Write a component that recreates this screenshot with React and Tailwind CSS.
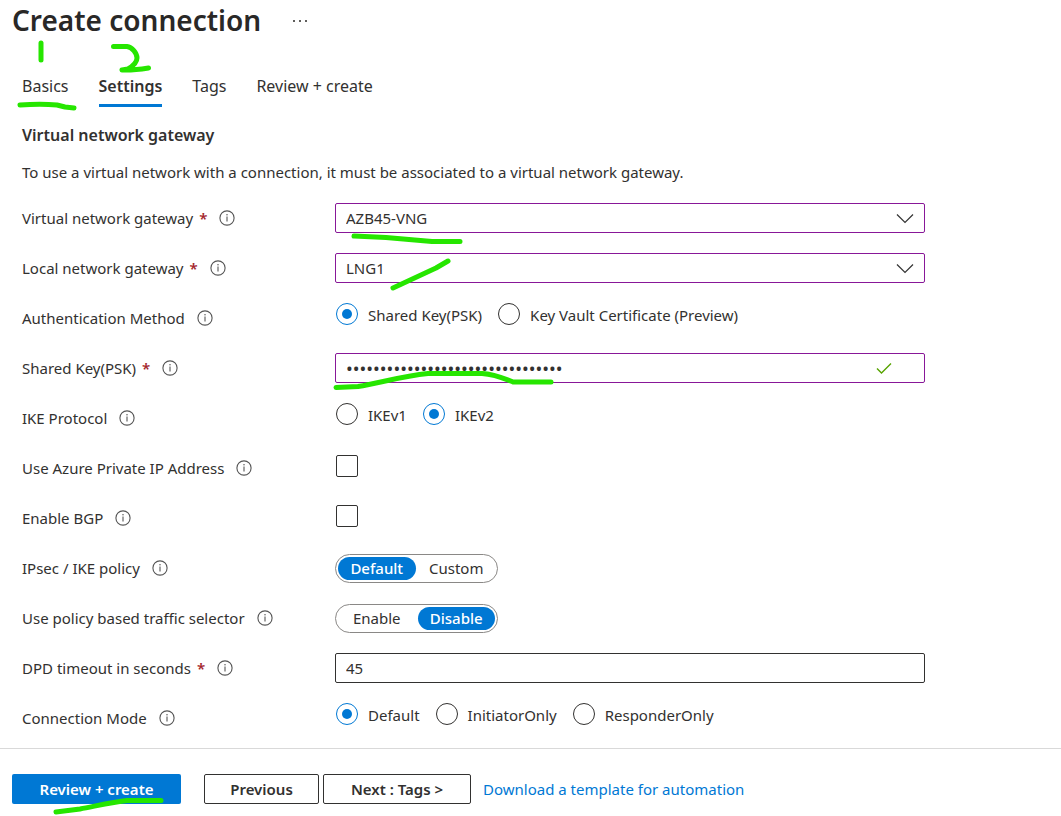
import { useState } from "react";

function InfoIcon() {
  return (
    <svg className="size-4 shrink-0" viewBox="0 0 16 16" fill="none" aria-hidden="true">
      <circle cx="8" cy="8" r="7.1" stroke="#555" strokeWidth="1.1" />
      <path d="M8 6.500v5" stroke="#444" strokeWidth="1" />
      <circle cx="8" cy="4.700" r=".7" fill="#444" />
    </svg>
  );
}

function Row({ label, htmlFor, required, children }) {
  const Tag = htmlFor ? "label" : "span";
  return (
    <div className="grid h-[50px] grid-cols-[313px_minmax(0,590px)] items-center">
      <div className="flex items-center">
        <Tag htmlFor={htmlFor}>{label}</Tag>
        {required && <span className="ml-1.5 font-semibold text-[#a4262c]">*</span>}
        <span className="ml-3 flex">
          <InfoIcon />
        </span>
      </div>
      {children}
    </div>
  );
}

function Dropdown({ id, value }) {
  return (
    <div className="relative">
      <select
        id={id}
        defaultValue={value}
        className="block h-[30px] w-full appearance-none rounded-xs border border-[#881798] bg-white px-2.5 leading-5"
      >
        <option>{value}</option>
      </select>
      <svg
        className="pointer-events-none absolute top-2 right-[11px] h-3.5 w-[18px]"
        viewBox="0 0 18 14"
        fill="none"
        aria-hidden="true"
      >
        <path d="M1 3.5l8 8 8-8" stroke="#333" strokeWidth="1.2" />
      </svg>
    </div>
  );
}

function RadioGroup({ name, options, value }) {
  const [selected, setSelected] = useState(value);
  return (
    <div role="radiogroup" aria-label={name} className="flex gap-4 pb-2 pl-px">
      {options.map((option) => (
        <label key={option} className="flex items-center gap-2.5">
          <input
            type="radio"
            name={name}
            checked={selected === option}
            onChange={() => setSelected(option)}
            className="grid size-[22px] shrink-0 appearance-none place-items-center rounded-full border border-[#323130] before:size-2.5 before:rounded-full checked:border-[#0078d4] checked:before:bg-[#0078d4]"
          />
          <span className="pt-0.5">{option}</span>
        </label>
      ))}
    </div>
  );
}

function Toggle({ name, options, value }) {
  const [selected, setSelected] = useState(value);
  return (
    <div
      role="group"
      aria-label={name}
      className="grid h-[29px] w-[163px] grid-cols-2 gap-0.5 rounded-full border border-[#8a8886] p-0.5"
    >
      {options.map((option) => (
        <button
          key={option}
          type="button"
          aria-pressed={selected === option}
          onClick={() => setSelected(option)}
          className="rounded-full leading-5 aria-pressed:bg-[#0078d4] aria-pressed:font-medium aria-pressed:text-white"
        >
          {option}
        </button>
      ))}
    </div>
  );
}

function Checkbox({ id }) {
  return (
    <div className="flex pb-1 pl-px">
      <input
        id={id}
        type="checkbox"
        className="size-[22px] appearance-none rounded-xs border border-[#323130] checked:bg-[#0078d4]"
      />
    </div>
  );
}

function PenMarks() {
  return (
    <svg
      className="pointer-events-none absolute top-0 left-0"
      width="1061"
      height="816"
      viewBox="0 0 1061 816"
      fill="none"
      stroke="#26e600"
      strokeWidth="5"
      strokeLinecap="round"
      strokeLinejoin="round"
      aria-hidden="true"
    >
      <path d="M41 43V60" />
      <path d="M113.500 46.500H127C132 47 137 53 137 58C137 62 133 66 128 69L122 70C131 70.500 139 69.500 148.500 68" />
      <path d="M20 105C34 104 46 104 57 105L65 107L74 108" />
      <path d="M354 236L386 237.500L432 241.500H460" />
      <path d="M393 288L436 268L448 261" />
      <path d="M336 387.500L358 386.500C380 383 402 376 428 373.500H482C494 374 503 378 513 382H551" />
      <path d="M56 812L80 809C96 806 113 802 127 800.500H161" />
    </svg>
  );
}

const tabs = ["Basics", "Settings", "Tags", "Review + create"];

export default function App() {
  return (
    <div className="relative min-h-screen overflow-hidden bg-white font-['Noto_Sans',sans-serif] text-[15px] leading-5 text-[#323130]">
      <header className="flex items-center gap-8 pl-3">
        <h1 className="text-[28px] leading-10 font-semibold text-[#292827]">Create connection</h1>
        <button type="button" aria-label="More options" className="flex gap-1 pt-0.5">
          <span className="size-0.5 bg-[#605e5c]" />
          <span className="size-0.5 bg-[#605e5c]" />
          <span className="size-0.5 bg-[#605e5c]" />
        </button>
      </header>

      <nav className="mt-8 flex gap-[30px] pl-[22px] text-base leading-7">
        {tabs.map((tab) => (
          <a
            key={tab}
            href="#"
            aria-current={tab === "Settings" ? "page" : undefined}
            className="border-b-3 border-transparent pb-1 aria-[current=page]:border-[#0078d4] aria-[current=page]:font-semibold"
          >
            {tab}
          </a>
        ))}
      </nav>

      <main className="pt-4 pl-[22px]">
        <h2 className="text-base leading-6 font-semibold">Virtual network gateway</h2>
        <p className="mt-[15px] mb-[11px]">
          To use a virtual network with a connection, it must be associated to a virtual network
          gateway.
        </p>

        <Row label="Virtual network gateway" htmlFor="vng" required>
          <Dropdown id="vng" value="AZB45-VNG" />
        </Row>
        <Row label="Local network gateway" htmlFor="lng" required>
          <Dropdown id="lng" value="LNG1" />
        </Row>
        <Row label="Authentication Method">
          <RadioGroup
            name="Authentication Method"
            options={["Shared Key(PSK)", "Key Vault Certificate (Preview)"]}
            value="Shared Key(PSK)"
          />
        </Row>
        <Row label="Shared Key(PSK)" htmlFor="psk" required>
          <div className="relative">
            <input
              id="psk"
              type="password"
              defaultValue="abcdefghijklmnopqrstuvwxyz012345"
              className="block h-[30px] w-full rounded-xs border border-[#881798] px-2.5 text-lg"
            />
            <svg
              className="pointer-events-none absolute top-2 right-[33px] size-4"
              viewBox="0 0 16 16"
              fill="none"
              aria-hidden="true"
            >
              <path d="M1 7.500l4.500 4.500L15 2.500" stroke="#57a300" strokeWidth="1.400" />
            </svg>
          </div>
        </Row>
        <Row label="IKE Protocol">
          <RadioGroup name="IKE Protocol" options={["IKEv1", "IKEv2"]} value="IKEv2" />
        </Row>
        <Row label="Use Azure Private IP Address" htmlFor="private-ip">
          <Checkbox id="private-ip" />
        </Row>
        <Row label="Enable BGP" htmlFor="bgp">
          <Checkbox id="bgp" />
        </Row>
        <Row label="IPsec / IKE policy">
          <Toggle name="IPsec / IKE policy" options={["Default", "Custom"]} value="Default" />
        </Row>
        <Row label="Use policy based traffic selector">
          <Toggle
            name="Use policy based traffic selector"
            options={["Enable", "Disable"]}
            value="Disable"
          />
        </Row>
        <Row label="DPD timeout in seconds" htmlFor="dpd" required>
          <input
            id="dpd"
            type="text"
            defaultValue="45"
            className="block h-[30px] w-full rounded-xs border border-[#323130] px-2.5"
          />
        </Row>
        <Row label="Connection Mode">
          <RadioGroup
            name="Connection Mode"
            options={["Default", "InitiatorOnly", "ResponderOnly"]}
            value="Default"
          />
        </Row>
      </main>

      <footer className="mt-[5px] flex items-center border-t border-[#d9d9d9] pt-[25px] pb-3 pl-3">
        <button
          type="button"
          className="h-[30px] w-[169px] rounded-xs bg-[#0078d4] font-semibold text-white"
        >
          Review + create
        </button>
        <button
          type="button"
          className="ml-[23px] h-[30px] w-[115px] rounded-xs border border-[#323130] font-semibold"
        >
          Previous
        </button>
        <button
          type="button"
          className="ml-1 h-[30px] w-[148px] rounded-xs border border-[#323130] font-semibold"
        >
          Next : Tags &gt;
        </button>
        <a href="#" className="ml-3 text-[#0078d4]">
          Download a template for automation
        </a>
      </footer>

      <PenMarks />
    </div>
  );
}
